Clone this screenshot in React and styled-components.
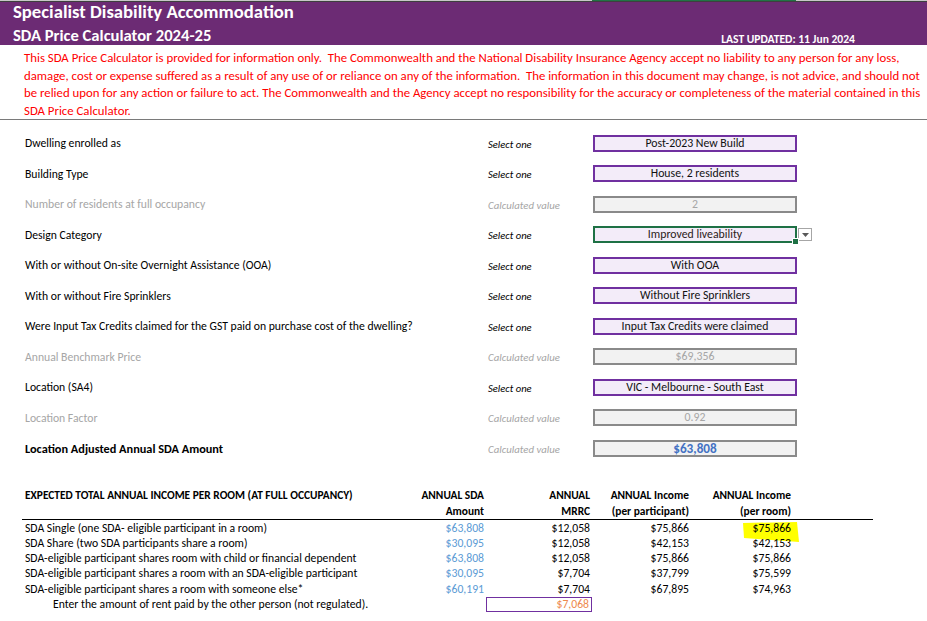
import React from 'react';
import styled, { createGlobalStyle, css } from 'styled-components';

const GlobalStyle = createGlobalStyle`
    html, body {
        margin: 0;
        padding: 0;
        background: #fff;
    }

    body {
        font-family: Carlito, Lato, "Noto Sans", sans-serif;
        color: #000;
    }
`;

const Page = styled.div`
    width: 927px;
    height: 621px;
    overflow: hidden;
    background: #fff;
`;

const TopStrip = styled.div`
    display: flex;
    height: 1px;
    background: #c8c8c8;
    border-bottom: 1px solid #3f3f3f;

    span {
        width: 204px;
        margin-left: 592px;
        background: #217346;
    }
`;

const Banner = styled.header`
    height: 43px;
    background: #6c2b74;
    color: #fff;
    padding: 0 72px 0 13px;
    display: flex;
    flex-direction: column;
`;

const Title = styled.h1`
    margin: -1px 0 0;
    font-size: 18.7px;
    line-height: 21px;
    font-weight: 700;
`;

const SubTitleRow = styled.div`
    display: flex;
    justify-content: space-between;
    align-items: flex-end;
    margin-top: 3px;

    h2 {
        margin: 0;
        font-size: 16.6px;
        line-height: 20px;
        font-weight: 700;
    }

    span {
        font-size: 11.6px;
        line-height: 11px;
        font-weight: 700;
    }
`;

const Disclaimer = styled.div`
    padding: 4px 0 0 24px;
    color: #ff0000;
    font-size: 12.8px;
    line-height: 17.5px;
    border-bottom: 1px solid #7a7a7a;
    height: 70px;

    div {
        white-space: pre;
    }
`;

const Form = styled.section`
    padding-top: 8px;
`;

const FormRow = styled.div`
    display: grid;
    grid-template-columns: 463px 105px 204px 16px;
    align-items: center;
    height: 30.5px;
    padding-left: 25px;
`;

const Label = styled.div`
    font-size: ${(p) => (p.$bold ? '12.3px' : '11.7px')};
    color: ${(p) => (p.$muted ? '#a6a6a6' : '#000')};
    font-weight: ${(p) => (p.$bold ? 700 : 400)};
    white-space: nowrap;
`;

const Hint = styled.div`
    font-size: ${(p) => (p.$muted ? '10.8px' : '10.6px')};
    font-style: italic;
    color: ${(p) => (p.$muted ? '#a6a6a6' : '#000')};
    padding-top: 2px;
`;

const ValueBox = styled.div`
    position: relative;
    box-sizing: border-box;
    height: 17px;
    border: 2px solid #7030a0;
    background: #f3ecf9;
    font-size: 11.8px;
    line-height: 13px;
    text-align: center;
    color: #111;
    white-space: nowrap;

    ${(p) => p.$kind === 'calc' && css`
        border-color: #8a8a8a;
        background: #f2f2f2;
        color: #a6a6a6;
    `}

    ${(p) => p.$kind === 'total' && css`
        border-color: #8a8a8a;
        background: #f2f2f2;
        color: #4472c4;
        font-weight: 700;
        font-size: 13.2px;
    `}

    ${(p) => p.$kind === 'active' && css`
        border-color: #1e7145;
        color: #2b2118;
    `}
`;

const Handle = styled.span`
    position: absolute;
    right: -4px;
    bottom: -4px;
    width: 5px;
    height: 5px;
    background: #1e7145;
    border: 1px solid #fff;
`;

const DropButton = styled.div`
    box-sizing: border-box;
    width: 14px;
    height: 13px;
    margin-left: 1px;
    border: 1px solid #a6a6a6;
    background: #fff;
    display: flex;
    align-items: center;
    justify-content: center;
`;

const Table = styled.section`
    margin: 23px 0 0 22px;
    width: 851px;
`;

const columns = '378px 86px 106px 99px 102px 80px';

const HeadRow = styled.div`
    display: grid;
    grid-template-columns: ${columns};
    height: 32px;
    border-bottom: 1px solid #000;
    font-size: 11.4px;
    font-weight: 700;
    line-height: 16px;
`;

const HeadCell = styled.div`
    text-align: ${(p) => (p.$left ? 'left' : 'right')};
    padding: ${(p) => (p.$left ? '0 0 0 3px' : '0 2px 0 0')};
    white-space: nowrap;
`;

const Body = styled.div`
    padding-top: 1px;
`;

const Row = styled.div`
    display: grid;
    grid-template-columns: ${columns};
    height: 15.3px;
    font-size: 11.7px;
    line-height: 15.3px;
`;

const Cell = styled.div`
    position: relative;
    box-sizing: border-box;
    white-space: nowrap;
    text-align: ${(p) => (p.$left ? 'left' : 'right')};
    padding: ${(p) => (p.$left ? `0 0 0 ${p.$indent || 3}px` : '0 2px 0 0')};
    color: ${(p) => p.$color || '#000'};

    ${(p) => p.$boxed && css`
        border: 1px solid #7030a0;
        line-height: 13.3px;
        padding-right: 2px;
    `}

    svg {
        position: absolute;
        right: -7px;
        top: 1px;
    }

    span {
        position: relative;
    }
`;

const formRows = [
    { label: 'Dwelling enrolled as', value: 'Post-2023 New Build' },
    { label: 'Building Type', value: 'House, 2 residents' },
    { label: 'Number of residents at full occupancy', value: '2', kind: 'calc' },
    { label: 'Design Category', value: 'Improved liveability', kind: 'active' },
    { label: 'With or without On-site Overnight Assistance (OOA)', value: 'With OOA' },
    { label: 'With or without Fire Sprinklers', value: 'Without Fire Sprinklers' },
    { label: 'Were Input Tax Credits claimed for the GST paid on purchase cost of the dwelling?', value: 'Input Tax Credits were claimed' },
    { label: 'Annual Benchmark Price', value: '$69,356', kind: 'calc' },
    { label: 'Location (SA4)', value: 'VIC - Melbourne - South East' },
    { label: 'Location Factor', value: '0.92', kind: 'calc' },
    { label: 'Location Adjusted Annual SDA Amount', value: '$63,808', kind: 'total' },
];

const incomeRows = [
    ['SDA Single (one SDA- eligible participant in a room)', '$63,808', '$12,058', '$75,866', '$75,866'],
    ['SDA Share (two SDA participants share a room)', '$30,095', '$12,058', '$42,153', '$42,153'],
    ['SDA-eligible participant shares room with child or financial dependent', '$63,808', '$12,058', '$75,866', '$75,866'],
    ['SDA-eligible participant shares a room with an SDA-eligible participant', '$30,095', '$7,704', '$37,799', '$75,599'],
    ['SDA-eligible participant shares a room with someone else*', '$60,191', '$7,704', '$67,895', '$74,963'],
];

const disclaimer = [
    'This SDA Price Calculator is provided for information only.  The Commonwealth and the National Disability Insurance Agency accept no liability to any person for any loss,',
    'damage, cost or expense suffered as a result of any use of or reliance on any of the information.  The information in this document may change, is not advice, and should not',
    'be relied upon for any action or failure to act. The Commonwealth and the Agency accept no responsibility for the accuracy or completeness of the material contained in this',
    'SDA Price Calculator.',
];

const App = () => {
    return (
        <Page>
            <GlobalStyle />
            <TopStrip><span /></TopStrip>

            <Banner>
                <Title>Specialist Disability Accommodation</Title>
                <SubTitleRow>
                    <h2>SDA Price Calculator 2024-25</h2>
                    <span>LAST UPDATED: 11 Jun 2024</span>
                </SubTitleRow>
            </Banner>

            <Disclaimer>
                {disclaimer.map((line) => (
                    <div key={line}>{line}</div>
                ))}
            </Disclaimer>

            <Form>
                {formRows.map((row) => {
                    const calculated = row.kind === 'calc' || row.kind === 'total';
                    return (
                        <FormRow key={row.label}>
                            <Label $muted={row.kind === 'calc'} $bold={row.kind === 'total'}>
                                {row.label}
                            </Label>
                            <Hint $muted={calculated}>
                                {calculated ? 'Calculated value' : 'Select one'}
                            </Hint>
                            <ValueBox $kind={row.kind}>
                                {row.value}
                                {row.kind === 'active' && <Handle />}
                            </ValueBox>
                            {row.kind === 'active' && (
                                <DropButton>
                                    <svg width="7" height="4" viewBox="0 0 7 4">
                                        <path d="M0 0h7L3.5 4z" fill="#595959" />
                                    </svg>
                                </DropButton>
                            )}
                        </FormRow>
                    );
                })}
            </Form>

            <Table>
                <HeadRow>
                    <HeadCell $left>EXPECTED TOTAL ANNUAL INCOME PER ROOM (AT FULL OCCUPANCY)</HeadCell>
                    <HeadCell>ANNUAL SDA<br />Amount</HeadCell>
                    <HeadCell>ANNUAL<br />MRRC</HeadCell>
                    <HeadCell>ANNUAL Income<br />(per participant)</HeadCell>
                    <HeadCell>ANNUAL Income<br />(per room)</HeadCell>
                    <HeadCell />
                </HeadRow>

                <Body>
                    {incomeRows.map(([label, sda, mrrc, perPerson, perRoom], i) => (
                        <Row key={label}>
                            <Cell $left>{label}</Cell>
                            <Cell $color="#5b9bd5">{sda}</Cell>
                            <Cell>{mrrc}</Cell>
                            <Cell>{perPerson}</Cell>
                            <Cell>
                                {i === 0 && (
                                    <svg width="58" height="21" viewBox="0 0 58 21">
                                        <path d="M1 1 L55 0 L57 20 L2 16 Z" fill="#ffff00" />
                                    </svg>
                                )}
                                <span>{perRoom}</span>
                            </Cell>
                            <Cell />
                        </Row>
                    ))}
                    <Row>
                        <Cell $left $indent={31}>Enter the amount of rent paid by the other person (not regulated).</Cell>
                        <Cell />
                        <Cell $boxed $color="#ee8a4e">$7,068</Cell>
                        <Cell />
                        <Cell />
                        <Cell />
                    </Row>
                </Body>
            </Table>
        </Page>
    );
};

export default App;
